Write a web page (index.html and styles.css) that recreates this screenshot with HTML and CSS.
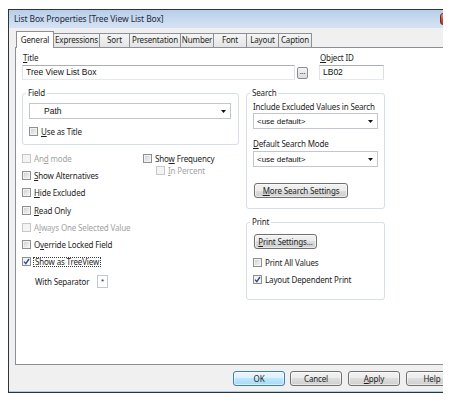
FILE: index.html
```html
<!DOCTYPE html>
<html>
<head>
<meta charset="utf-8">
<title>List Box Properties</title>
<link rel="stylesheet" href="styles.css">
</head>
<body>
<div class="clip">
  <div class="window">
    <div class="titlebar">
      <span class="title-text">List Box Properties [Tree View List Box]</span>
      <span class="close"></span>
    </div>
    <div class="frame">
      <div class="tabs">
        <div class="tab active t-general">General</div>
        <div class="tab t-expr">Expressions</div>
        <div class="tab t-sort">Sort</div>
        <div class="tab t-pres">Presentation</div>
        <div class="tab t-num">Number</div>
        <div class="tab t-font">Font</div>
        <div class="tab t-layout">Layout</div>
        <div class="tab t-caption">Caption</div>
      </div>
      <div class="panel">
        <div class="top-row">
          <div class="title-col">
            <div class="lbl"><u>T</u>itle</div>
            <div class="input-row">
              <div class="textbox title-box">Tree View List Box</div>
              <div class="dots-btn">...</div>
            </div>
          </div>
          <div class="id-col">
            <div class="lbl"><u>O</u>bject ID</div>
            <div class="input-row">
              <div class="textbox id-box">LB02</div>
            </div>
          </div>
        </div>
        <div class="main-row">
          <div class="left-col">
            <fieldset class="group field-group">
              <legend>Field</legend>
              <div class="combo path-combo"><span>Path</span><svg class="arrow" width="5" height="3" viewBox="0 0 5 3"><polygon points="0,0 5,0 2.5,3" fill="#111"/></svg></div>
              <div class="check-row use-title"><span class="cb"></span><span class="cl"><u>U</u>se as Title</span></div>
            </fieldset>
            <div class="options">
              <div class="opt-col">
                <div class="opt disabled"><span class="cb"></span><span class="cl">An<u>d</u> mode</span></div>
                <div class="opt"><span class="cb"></span><span class="cl"><u>S</u>how Alternatives</span></div>
                <div class="opt"><span class="cb"></span><span class="cl"><u>H</u>ide Excluded</span></div>
                <div class="opt"><span class="cb"></span><span class="cl"><u>R</u>ead Only</span></div>
                <div class="opt disabled"><span class="cb"></span><span class="cl">A<u>l</u>ways One Selected Value</span></div>
                <div class="opt"><span class="cb"></span><span class="cl">O<u>v</u>erride Locked Field</span></div>
                <div class="opt"><span class="cb checked"><svg width="7" height="7" viewBox="0 0 7 7"><path d="M1 3.6 L2.8 5.6 L6 1" fill="none" stroke="#2d4b8e" stroke-width="1.4"/></svg></span><span class="cl focus">Show as TreeView</span></div>
              </div>
              <div class="opt-col mid">
                <div class="opt freq"><span class="cb"></span><span class="cl">Sho<u>w</u> Frequency</span></div>
                <div class="opt pct disabled"><span class="cb"></span><span class="cl"><u>I</u>n Percent</span></div>
              </div>
            </div>
            <div class="sep-row">
              <span class="sep-label">With Separator</span>
              <span class="sep-box">*</span>
            </div>
          </div>
          <div class="right-col">
            <fieldset class="group search-group">
              <legend>Search</legend>
              <div class="lbl s-lbl1">Include Excluded Values in Search</div>
              <div class="combo s-combo1"><span>&lt;use default&gt;</span><svg class="arrow" width="5" height="3" viewBox="0 0 5 3"><polygon points="0,0 5,0 2.5,3" fill="#111"/></svg></div>
              <div class="lbl s-lbl2"><u>D</u>efault Search Mode</div>
              <div class="combo s-combo2"><span>&lt;use default&gt;</span><svg class="arrow" width="5" height="3" viewBox="0 0 5 3"><polygon points="0,0 5,0 2.5,3" fill="#111"/></svg></div>
              <div class="btn more-btn"><u>M</u>ore Search Settings</div>
            </fieldset>
            <fieldset class="group print-group">
              <legend>Print</legend>
              <div class="btn print-btn"><u>P</u>rint Settings...</div>
              <div class="check-row p-row1"><span class="cb"></span><span class="cl">Print All Values</span></div>
              <div class="check-row p-row2"><span class="cb checked"><svg width="7" height="7" viewBox="0 0 7 7"><path d="M1 3.6 L2.8 5.6 L6 1" fill="none" stroke="#2d4b8e" stroke-width="1.4"/></svg></span><span class="cl">Layout Dependent Print</span></div>
            </fieldset>
          </div>
        </div>
      </div>
      <div class="buttons">
        <div class="btn dlg-btn default">OK</div>
        <div class="btn dlg-btn b-cancel">Cancel</div>
        <div class="btn dlg-btn b-apply"><u>A</u>pply</div>
        <div class="btn dlg-btn b-help">Help</div>
      </div>
    </div>
  </div>
</div>
</body>
</html>
```

FILE: styles.css
```css
* { box-sizing: border-box; }

body {
  margin: 0;
  background: #ffffff;
  font-family: "Noto Sans", "DejaVu Sans", sans-serif;
  font-size: 8px;
  color: #1e1e1e;
}

u { text-decoration: underline; text-underline-offset: 1px; }

.clip {
  margin: 9px 0 0 8px;
  width: 435px;
  height: 384px;
  overflow: hidden;
}

.window {
  width: 479px;
  height: 384px;
  border: 1px solid #2f3439;
  background: #f0f0f0;
  display: flex;
  flex-direction: column;
}

.titlebar {
  height: 18px;
  flex-shrink: 0;
  display: flex;
  background: linear-gradient(to bottom, #b7cde8 0%, #c6d8ee 45%, #d6e3f3 100%);
}

.title-text {
  padding-left: 5px;
  line-height: 18px;
  font-size: 8.5px;
  color: #1b2a3d;
  letter-spacing: -0.1px;
}

.close {
  margin: 3px 6px 0 auto;
  width: 40px;
  height: 12px;
  border: 1px solid #6b2b22;
  border-radius: 3px;
  background: linear-gradient(to bottom, #e2a092, #c7513f 50%, #b8372a);
}

.frame {
  height: 364px;
  padding: 3px 0 0 6px;
  background: #f0f0f0;
  border-bottom: 1px solid #a9cfe0;
}

.tabs {
  height: 16px;
  margin-left: 1px;
  display: flex;
  align-items: flex-end;
  position: relative;
  z-index: 1;
}

.tab {
  height: 14px;
  margin-left: -1px;
  border: 1px solid #8c8f96;
  border-bottom: none;
  background: linear-gradient(to bottom, #f5f5f5, #e4e4e4);
  line-height: 12px;
  text-align: center;
  letter-spacing: -0.15px;
  white-space: nowrap;
}

.tab.active {
  height: 17px;
  margin-left: 0;
  margin-bottom: -1px;
  background: #ffffff;
  line-height: 15px;
}

.t-general { width: 38px; }
.t-expr { width: 47px; }
.t-sort { width: 31px; }
.t-pres { width: 52px; }
.t-num { width: 34px; }
.t-font { width: 34px; }
.t-layout { width: 33px; }
.t-caption { width: 34px; }

.panel {
  height: 318px;
  border: 1px solid #8c8f96;
  background: #ffffff;
  padding: 5px 0 0 6px;
}

.lbl {
  height: 10px;
  line-height: 10px;
  letter-spacing: -0.15px;
  white-space: nowrap;
}

.top-row {
  display: flex;
  height: 27px;
}

.title-col { width: 287px; }
.title-col .lbl, .id-col .lbl { padding-left: 1px; }

.input-row {
  display: flex;
  align-items: center;
  height: 15px;
  margin-top: 2px;
}

.textbox {
  height: 15px;
  border: 1px solid #abadb3;
  border-color: #abadb3 #dbdfe6 #e3e9ef #e2e3ea;
  background: #ffffff;
  font-family: "Liberation Sans", Arial, sans-serif;
  font-size: 8.5px;
  line-height: 13px;
  padding-left: 3px;
  color: #111;
}

.title-box { width: 273px; }

.dots-btn {
  width: 11px;
  height: 12px;
  margin-left: 2px;
  border: 1px solid #8d8d8d;
  border-radius: 2px;
  background: linear-gradient(to bottom, #f4f4f4, #dcdcdc);
  font-size: 7px;
  line-height: 8px;
  text-align: center;
  color: #333;
}

.id-col { margin-left: 10px; }
.id-box { width: 65px; }

.main-row {
  display: flex;
  margin-top: 8px;
}

.left-col { width: 217px; }

.right-col {
  width: 139px;
  margin-left: 7px;
}

.group {
  margin: 0;
  min-width: 0;
  border: 1px solid #d5dfe5;
  border-radius: 3px;
  padding: 0 6px;
}

.group legend {
  padding: 0 2px;
  margin-left: -3px;
  height: 10px;
  line-height: 10px;
  letter-spacing: -0.15px;
}

.field-group {
  width: 217px;
  padding-bottom: 8px;
}

.combo {
  height: 16px;
  border: 1px solid #c3c6cc;
  background: #ffffff;
  display: flex;
  align-items: center;
  font-family: "Liberation Sans", Arial, sans-serif;
  font-size: 8.5px;
  color: #111;
}

.combo .arrow {
  margin-left: auto;
  margin-right: 4px;
  flex-shrink: 0;
}

.path-combo {
  width: 202px;
  margin-top: 5px;
  padding-left: 14px;
}

.check-row, .opt {
  display: flex;
  align-items: center;
  white-space: nowrap;
  letter-spacing: -0.15px;
}

.check-row { height: 10px; }
.use-title { margin-top: 7px; }

.cb {
  width: 9px;
  height: 9px;
  flex-shrink: 0;
  border: 1px solid #8e8f8f;
  background: linear-gradient(135deg, #c9ccd1 0%, #e6e7e9 60%, #f7f7f7 100%);
  box-shadow: inset 0 0 0 1px #f2f2f2;
  display: flex;
  align-items: center;
  justify-content: center;
}

.cb.checked {
  background: linear-gradient(135deg, #e9ecf0, #ffffff);
}

.cl { margin-left: 3px; }

.disabled { color: #a3a3a3; }
.disabled .cb {
  border-color: #c8c8c8;
  background: #f4f4f4;
  box-shadow: none;
}

.options {
  display: flex;
  margin-top: 4.5px;
}

.opt-col { width: 121px; }
.opt-col .opt { height: 17.3px; }

.opt-col.mid { width: auto; }
.opt-col.mid .freq { height: 17px; }
.opt-col.mid .pct {
  height: 10px;
  margin-top: -1px;
  padding-left: 13px;
}

.focus {
  margin-left: 2px;
  border: 1px dotted #3a3a3a;
  padding: 0 1px;
  line-height: 8px;
}

.sep-row {
  display: flex;
  align-items: center;
  height: 13px;
  margin-top: 4.5px;
  letter-spacing: -0.15px;
}

.sep-label {
  width: 75px;
  padding-left: 13px;
  white-space: nowrap;
}

.sep-box {
  width: 11px;
  height: 13px;
  border: 1px solid #c3c6cc;
  background: #fff;
  font-family: "Liberation Sans", Arial, sans-serif;
  font-size: 8px;
  line-height: 11px;
  text-align: center;
}

.search-group {
  width: 139px;
  padding-bottom: 10px;
}

.s-lbl1 { margin-top: 4px; }
.s-combo1 { margin-top: 1px; }
.s-lbl2 { margin-top: 10px; }
.s-combo2 { margin-top: 2px; }

.search-group .combo {
  width: 125px;
  padding-left: 3px;
  font-size: 8px;
}

.btn {
  height: 15px;
  border: 1px solid #707070;
  border-radius: 3px;
  background: linear-gradient(to bottom, #f2f2f2 0%, #ebebeb 50%, #dddddd 50%, #cfcfcf 100%);
  box-shadow: inset 0 0 0 1px rgba(255, 255, 255, 0.55);
  line-height: 13px;
  text-align: center;
  white-space: nowrap;
  letter-spacing: -0.15px;
  color: #1e1e1e;
}

.more-btn {
  width: 94px;
  margin-top: 16px;
  margin-left: 1px;
}

.print-group {
  width: 139px;
  margin-top: 8px;
  padding-bottom: 15px;
}

.print-btn {
  width: 63px;
  margin-top: 7px;
  margin-left: 1px;
}

.p-row1 { margin-top: 8px; }
.p-row2 { margin-top: 7px; }

.buttons {
  display: flex;
  margin-top: 6px;
  padding-left: 218px;
}

.dlg-btn {
  width: 52px;
  flex-shrink: 0;
}

.dlg-btn.default {
  border-color: #3c7fb1;
  background: linear-gradient(to bottom, #eaf6fd 0%, #d9f0fc 50%, #bee6fd 50%, #a7d9f5 100%);
}

.b-cancel { margin-left: 5px; }
.b-apply { margin-left: 6px; }
.b-help { margin-left: 6px; }
```
